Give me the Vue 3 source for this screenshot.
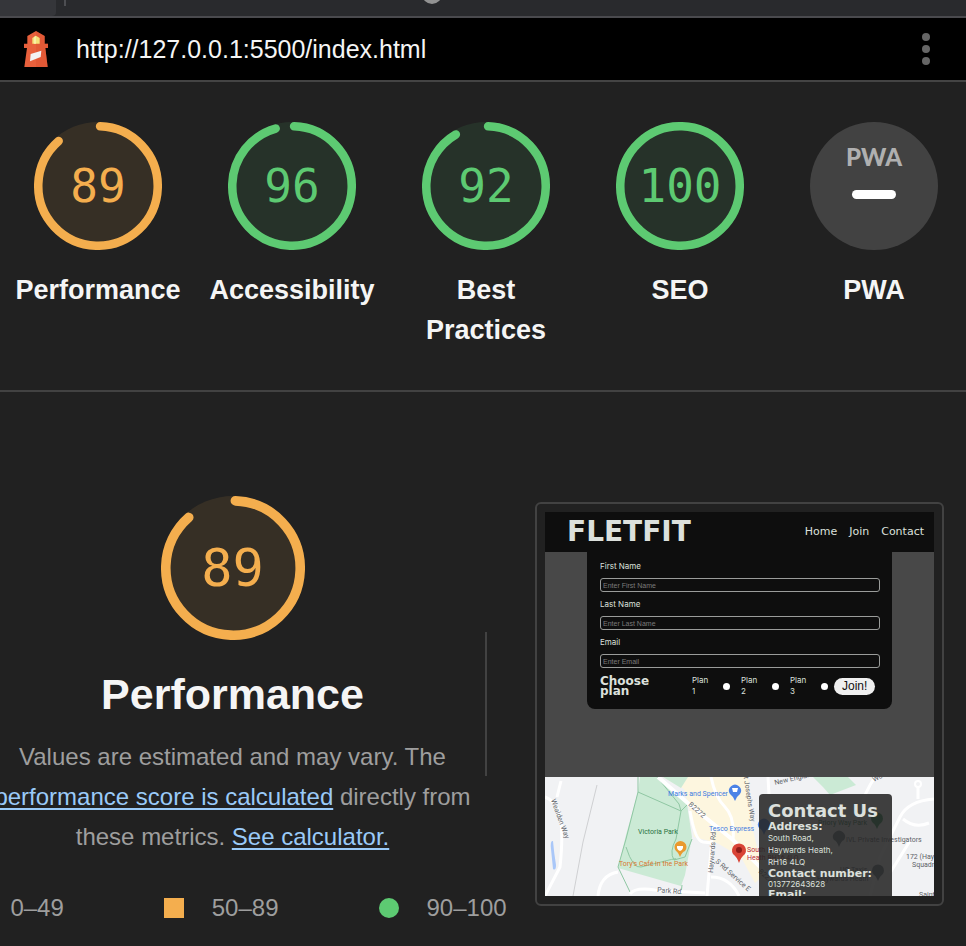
<script setup>
const circumference = 2 * Math.PI * 56
const arc = (score) =>
  score === 100 ? circumference : (circumference * score) / 100 - 4

const categories = [
  { label: 'Performance', score: 89, rating: 'average' },
  { label: 'Accessibility', score: 96, rating: 'pass' },
  { label: 'Best Practices', score: 92, rating: 'pass' },
  { label: 'SEO', score: 100, rating: 'pass' },
]

const fields = [
  { id: 'first-name', label: 'First Name', hint: 'Enter First Name' },
  { id: 'last-name', label: 'Last Name', hint: 'Enter Last Name' },
  { id: 'email', label: 'Email', hint: 'Enter Email' },
]
</script>

<template>
  <div class="report">
    <div class="tabstrip">
      <span class="tab"></span>
      <span class="tab-rule"></span>
      <span class="tab-dot"></span>
    </div>

    <header class="topbar">
      <svg class="logo" viewBox="42 27 72 108" aria-hidden="true">
        <path fill="#e8603c" d="M52 42 78 27 104 42V65H114V78H106L113 135H43L51 78H42V65H52Z" />
        <path fill="#d94f2c" opacity=".4" d="M78 27 104 42V65H114V78H106L113 135H78Z" />
        <path fill="#f5e27a" d="M67 48 78 41 89 48V65H67Z" />
        <path fill="#f9f0a4" d="M72 45 78 41V65H72Z" />
        <path fill="#f3f3f3" d="M62 96 94 86 92 105 60 118Z" />
      </svg>
      <a class="url" href="http://127.0.0.1:5500/index.html">http://127.0.0.1:5500/index.html</a>
      <button class="tools" type="button" aria-label="Tools menu">
        <svg viewBox="0 0 8 32" aria-hidden="true">
          <circle cx="4" cy="4" r="4" /><circle cx="4" cy="16" r="4" /><circle cx="4" cy="28" r="4" />
        </svg>
      </button>
    </header>

    <nav class="scores">
      <a v-for="c in categories" :key="c.label" class="score" href="#performance">
        <span class="gauge" :class="c.rating">
          <svg viewBox="0 0 120 120" aria-hidden="true">
            <circle class="gauge-base" cx="60" cy="60" r="60" />
            <circle class="gauge-arc" cx="60" cy="60" r="56" transform="rotate(-88 60 60)"
              :stroke-dasharray="`${arc(c.score)} ${circumference}`" />
          </svg>
          <span class="gauge-value">{{ c.score }}</span>
        </span>
        <span class="score-label">{{ c.label }}</span>
      </a>
      <a class="score" href="#pwa">
        <span class="gauge">
          <svg viewBox="0 0 128 128" aria-hidden="true">
            <circle cx="64" cy="64" r="64" fill="#424242" />
            <text class="pwa-mark" x="64" y="44" text-anchor="middle">PWA</text>
            <rect x="42" y="68" width="44" height="9" rx="4.5" fill="#fff" />
          </svg>
        </span>
        <span class="score-label">PWA</span>
      </a>
    </nav>

    <main id="performance" class="category">
      <section class="summary">
        <span class="gauge large average">
          <svg viewBox="0 0 120 120" aria-hidden="true">
            <circle class="gauge-base" cx="60" cy="60" r="60" />
            <circle class="gauge-arc" cx="60" cy="60" r="56" transform="rotate(-88 60 60)"
              :stroke-dasharray="`${arc(89)} ${circumference}`" />
          </svg>
          <span class="gauge-value">89</span>
        </span>
        <h1>Performance</h1>
        <p>
          Values are estimated and may vary. The
          <a href="#scoring">performance score is calculated</a> directly from these metrics.
          <a href="#calculator">See calculator.</a>
        </p>
        <ul class="scale">
          <li>
            <svg class="mark" viewBox="0 0 20 20" aria-hidden="true"><path d="M10 0 20 20H0Z" fill="#f33" /></svg>
            0–49
          </li>
          <li>
            <svg class="mark" viewBox="0 0 20 20" aria-hidden="true"><rect width="20" height="20" fill="#f4ae4e" /></svg>
            50–89
          </li>
          <li>
            <svg class="mark" viewBox="0 0 20 20" aria-hidden="true"><circle cx="10" cy="10" r="10" fill="#5dca72" /></svg>
            90–100
          </li>
        </ul>
      </section>

      <div class="divider"></div>

      <section class="preview">
        <div class="site">
          <header class="site-header">
            <strong class="brand">FLETFIT</strong>
            <nav>
              <a href="#home">Home</a>
              <a href="#join">Join</a>
              <a href="#contact">Contact</a>
            </nav>
          </header>

          <form class="signup" @submit.prevent>
            <template v-for="f in fields" :key="f.id">
              <label :for="f.id">{{ f.label }}</label>
              <input :id="f.id" class="field" type="text" :placeholder="f.hint" />
            </template>
            <div class="plans">
              <strong>Choose plan</strong>
              <label v-for="n in 3" :key="n" class="plan">
                <span>Plan {{ n }}</span>
                <input type="radio" name="plan" :value="n" />
              </label>
              <button type="submit">Join!</button>
            </div>
          </form>

          <div class="map">
            <svg class="map-art" viewBox="0 0 389 119" preserveAspectRatio="xMidYMin slice">
              <rect width="389" height="119" fill="#f1f2f4" />
              <path fill="#fdf6df" d="M118 0H203L206 45 212 70 222 96 210 106 196 80 172 66 149 60 145 34 139 12Z" />
              <path fill="#cbead5" d="M95 0H112L142 27 147 60 140 98 136 109 73 91 81 58 93 15Z" />
              <path fill="#cbead5" d="M118 0H143L136 11Z" />
              <path fill="#cbead5" d="M268 0H303L311 8 285 18 278 10Z" />
              <g fill="none" stroke="#8fc7a3">
                <path d="M93 15 136 34 142 28M93 0V15L81 62 73 90 85 115M112 0 134 27 136 34 131 62Q124 75 129 83L140 80 147 62M81 70Q88 92 96 90T120 84T129 83M137 108 136 117" />
              </g>
              <g fill="none" stroke="#fff" stroke-width="4">
                <path d="M113 0 145 28 188 63 225 100 240 119" />
                <path d="M0 20Q14 26 16 44T15 90L0 119M16 4 12 20" stroke-width="3" />
                <path d="M145 34Q150 64 158 65L168 66M168 50 162 119M73 95Q55 98 53 119M85 117Q90 110 110 113L160 116M166 100Q185 100 194 119" stroke-width="3" />
                <path d="M223 0 224 18M166 0Q170 20 180 30T188 63" stroke-width="3" />
                <path d="M330 0Q320 15 316 30M389 22Q363 24 355 40L335 80 325 119M373 10V22M358 42Q370 52 384 46M365 64 345 96" stroke-width="3" />
                <circle cx="373" cy="7" r="3" stroke-width="2" />
              </g>
              <path d="M52 8 38 65 28 119" fill="none" stroke="#cfd0d2" stroke-width="1" />
              <path d="M8 64Q5 63 6 72L8 92Q11 94 11 88 9 76 8 64Z" fill="#a9c7f8" />

              <g fill="#5d6268">
                <text transform="translate(6 23) rotate(70)">Wealden Way</text>
                <text transform="translate(143 28) rotate(42)">B2272</text>
                <text transform="translate(168 96) rotate(-86)">Haywards Rd</text>
                <text transform="translate(170 85) rotate(42)">S Rd Service E</text>
                <text transform="translate(198 -4) rotate(81)">St Josephs Way</text>
                <text transform="translate(112 115) rotate(5)">Park Rd</text>
                <text transform="translate(230 8) rotate(-13)">New England</text>
                <text transform="translate(329 5) rotate(-28)">Wood</text>
                <text transform="translate(213 95) rotate(42)">B2272</text>
                <text x="301" y="65">IVL Private Investigators</text>
                <text x="295" y="95">UO Taxis</text>
                <text x="272" y="104">Haywards Heath</text>
                <text x="361" y="82">172 (Hayw</text>
                <text x="367" y="90">Squadron</text>
                <text x="374" y="120">Saint</text>
              </g>
              <g fill="#3e7be0">
                <text x="183" y="19" text-anchor="end">Marks and Spencer</text>
                <text x="164" y="54">Tesco Express</text>
              </g>
              <text x="93" y="57" fill="#287343">Victoria Park</text>
              <text x="273" y="48" fill="#287343">Priory Way Park</text>
              <text x="74" y="89" fill="#d9782f">Tory's Café in the Park</text>
              <g fill="#b92d35">
                <text x="202" y="75">South Road</text>
                <text x="202" y="83">Heath RH16 4LQ</text>
              </g>
              <path fill="#4c83e6" d="M190 24Q188 19 185 17A6 6 0 1 1 195 17Q192 19 190 24Z" />
              <path fill="#fff" d="M187 11H193L192 15H188Z" />
              <path fill="#4c83e6" d="M219 58Q217 52 214 51A6 6 0 1 1 224 51Q221 52 219 58Z" />
              <path fill="#ea9a2f" d="M135 80Q133 75 131 74A6 6 0 1 1 140 74Q137 75 135 80Z" />
              <path fill="#fff" d="M132 69H138V71Q137 74 135 74T132 71Z" />
              <path fill="#d94436" d="M194 86Q192 80 188 77A7 7 0 1 1 200 77Q196 80 194 86Z" />
              <circle cx="194" cy="73" r="3" fill="#8e1d18" />
              <path fill="#2f8f50" d="M332 52Q330 47 328 46A6 6 0 1 1 336 46Q334 47 332 52Z" />
              <path fill="#66737c" d="M294 70Q292 64 289 63A6 6 0 1 1 299 63Q296 64 294 70ZM333 104Q331 99 329 98A6 6 0 1 1 337 98Q335 99 333 104Z" />
            </svg>
            <address class="contact">
              <h2>Contact Us</h2>
              <h3>Address:</h3>
              <p>South Road,<br />Haywards Heath,<br />RH16 4LQ</p>
              <h3>Contact number:</h3>
              <p class="phone">013772643628</p>
              <h3>Email:</h3>
            </address>
          </div>
        </div>
      </section>
    </main>
  </div>
</template>

<style>
body {
  background: #212121;
  overflow: hidden;
}
</style>

<style scoped>
* {
  box-sizing: border-box;
}
.report {
  font: 24px/40px "Liberation Sans", Arial, sans-serif;
  color: #f5f5f5;
  background: #212121;
  overflow: hidden;
}
h1, h2, h3, p, ul {
  margin: 0;
  padding: 0;
}
svg {
  display: block;
}
a {
  color: inherit;
  text-decoration: none;
}

.tabstrip {
  position: relative;
  display: flex;
  gap: 8px;
  height: 18px;
  background: #292a2d;
  border-bottom: 2px solid #4a4a4e;
  overflow: hidden;
}
.tab {
  width: 56px;
  background: #35363a;
  border-radius: 0 0 4px 0;
}
.tab-rule {
  width: 2px;
  height: 6px;
  background: #4d4e52;
}
.tab-dot {
  position: absolute;
  left: 422px;
  top: -16px;
  width: 20px;
  height: 20px;
  border-radius: 50%;
  background: #929292;
}

.topbar {
  display: flex;
  align-items: center;
  height: 64px;
  padding: 0 36px 0 24px;
  background: #000;
  border-bottom: 2px solid #444;
}
.logo {
  width: 24px;
  height: 36px;
}
.url {
  margin-left: 28px;
  font-size: 25px;
}
.tools {
  margin-left: auto;
  padding: 0;
  border: 0;
  background: none;
}
.tools svg {
  width: 8px;
  height: 32px;
  fill: #666;
}

.scores {
  display: grid;
  grid-template-columns: repeat(5, minmax(0, 1fr));
  margin-right: -5px;
  padding: 40px 0 40px 1px;
  border-bottom: 2px solid #424242;
}
.score {
  display: flex;
  flex-direction: column;
  align-items: center;
  gap: 20px;
}
.score-label {
  padding: 0 12px;
  font-size: 27px;
  font-weight: 700;
  text-align: center;
}
.gauge {
  display: grid;
  place-items: center;
  width: 128px;
  height: 128px;
  font: 46px/1 "DejaVu Sans Mono", monospace;
}
.gauge > * {
  grid-area: 1 / 1;
}
.gauge svg {
  width: 100%;
  height: 100%;
}
.gauge.large {
  width: 144px;
  height: 144px;
  font-size: 52px;
}
.gauge.average {
  color: #f4ae4e;
}
.gauge.pass {
  color: #5dca72;
}
.gauge-base {
  fill: currentColor;
  opacity: 0.1;
}
.gauge-arc {
  fill: none;
  stroke: currentColor;
  stroke-width: 8;
  stroke-linecap: round;
}
.pwa-mark {
  font: 900 24px Lato, sans-serif;
  fill: #b0b0b0;
}

.category {
  display: grid;
  grid-template-columns: 485fr 2px 479fr;
  align-items: center;
  padding: 88px 0 18px;
}
.summary {
  display: flex;
  flex-direction: column;
  align-items: center;
  margin-left: -20px;
  padding-top: 16px;
  color: #9e9e9e;
  text-align: center;
}
.summary h1 {
  margin: 24px 0 13px;
  font-size: 43px;
  line-height: 60px;
  color: #f5f5f5;
}
.summary p {
  padding: 0 8px;
}
.summary p a {
  color: #9acaf8;
  text-decoration: underline;
  text-decoration-thickness: 2px;
  text-underline-offset: 3px;
}
.scale {
  display: flex;
  gap: 100px;
  margin: 31px -40px 0 -36px;
  list-style: none;
  white-space: nowrap;
}
.scale li {
  display: flex;
  align-items: center;
  gap: 28px;
}
.mark {
  width: 20px;
  height: 20px;
}
.divider {
  height: 144px;
  background: #424242;
}
.preview {
  margin: 0 22px 0 48px;
  padding: 8px;
  border: 2px solid #424242;
  border-radius: 6px;
}

.site {
  display: flex;
  flex-direction: column;
  aspect-ratio: 389 / 384;
  background: #484848;
  color: #dce0dc;
  font: 8px/12px Inter, sans-serif;
  overflow: hidden;
}
.site-header {
  display: flex;
  align-items: center;
  justify-content: space-between;
  height: 40px;
  padding: 0 10px 0 22px;
  background: #0e0e0e;
  font-family: "DejaVu Sans", sans-serif;
}
.site-header nav {
  display: flex;
  gap: 12px;
  font-size: 11px;
}
.brand {
  font-size: 28px;
}
.signup {
  display: flex;
  flex-direction: column;
  margin: 0 42px;
  padding: 2px 12px 12px 13px;
  background: #0e0e0e;
  border-radius: 0 0 8px 8px;
}
.signup > label {
  line-height: 24px;
}
.field {
  width: 100%;
  height: 14px;
  padding: 0 2px;
  border: 1px solid #9a9c9a;
  border-radius: 3px;
  background: none;
  color: inherit;
  font: 7px "Liberation Sans", sans-serif;
}
.field::placeholder {
  color: #7b7b7b;
  opacity: 1;
}
.plans {
  display: flex;
  align-items: center;
  gap: 11px;
  margin-top: 7px;
}
.plans strong {
  width: 81px;
  padding-right: 25px;
  font: 700 12px/10px "DejaVu Sans", sans-serif;
}
.plan {
  display: flex;
  align-items: center;
  gap: 11px;
  line-height: 11px;
}
.plan span {
  width: 20px;
}
.plan input {
  appearance: none;
  width: 7px;
  height: 7px;
  margin: 0;
  border-radius: 50%;
  background: #fff;
}
.plans button {
  height: 17px;
  margin-left: -5px;
  padding: 0 8px;
  border: 0;
  border-radius: 9px;
  background: #efefef;
  color: #111;
  font: 12px/17px "Liberation Sans", sans-serif;
}

.map {
  position: relative;
  height: 119px;
  margin-top: auto;
  overflow: hidden;
}
.map-art {
  width: 100%;
  height: 100%;
}
.map-art text {
  font: 7px Roboto, sans-serif;
}
.contact {
  position: absolute;
  left: 55%;
  top: 17px;
  width: 133px;
  height: 120px;
  padding: 7px 0 0 9px;
  border-radius: 4px 4px 0 0;
  background: rgba(38, 38, 38, 0.88);
  font-style: normal;
  white-space: nowrap;
}
.contact h2 {
  font: 700 18px/20px "DejaVu Sans", sans-serif;
}
.contact h3 {
  font: 700 11px/11px "DejaVu Sans", sans-serif;
}
.contact .phone {
  line-height: 10px;
}
</style>
